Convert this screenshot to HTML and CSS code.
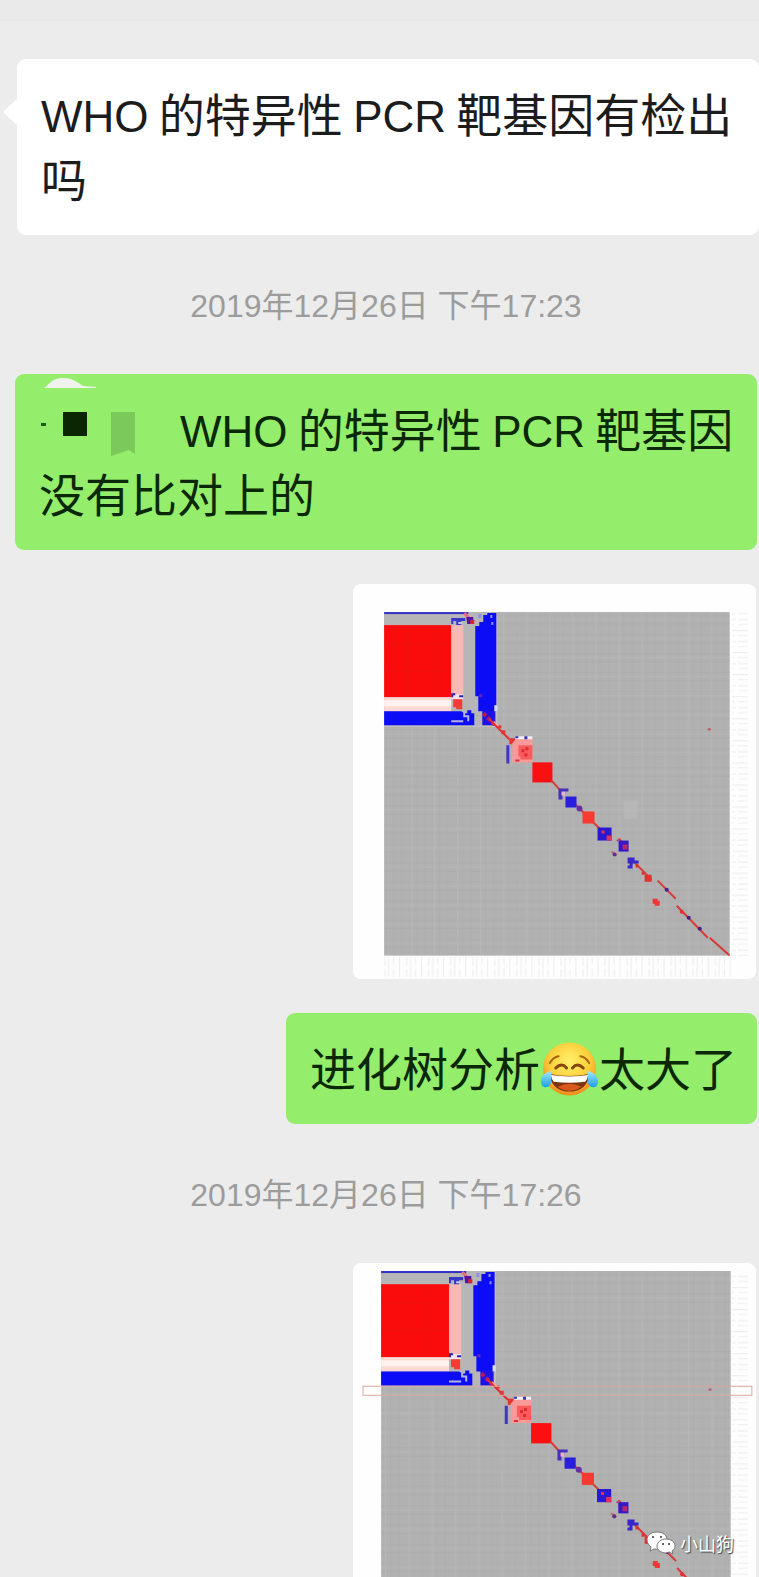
FILE: index.html
```
<!DOCTYPE html>
<html lang="zh-CN">
<head>
<meta charset="utf-8">
<meta name="viewport" content="width=device-width, initial-scale=1">
<title>聊天记录</title>
<link rel="stylesheet" href="styles.css">
</head>
<body>
<svg class="defs" aria-hidden="true">
  <defs>
    <pattern id="weave" width="23" height="19" patternUnits="userSpaceOnUse">
      <path d="M0 3.5H23M0 11.5H23" stroke="#a6a6a6" stroke-width="1" opacity=".5"/>
      <path d="M0 7.5H23M4.5 0V19" stroke="#bcbcbc" stroke-width="1" opacity=".5"/>
      <path d="M9.5 0V19M17.5 0V19" stroke="#a8a8a8" stroke-width="1" opacity=".4"/>
    </pattern>
    <pattern id="ticks-v" width="22" height="16" patternUnits="userSpaceOnUse">
      <path d="M2.5 0V16M9.5 0V13M13.5 0V16M18.5 0V12" stroke="#ececec"/>
    </pattern>
    <pattern id="ticks-h" width="16" height="22" patternUnits="userSpaceOnUse">
      <path d="M0 2.5H16M0 7.5H13M0 13.5H14M0 18.5H12" stroke="#eeeeee"/>
    </pattern>
    <symbol id="heatmap" viewBox="0 0 345 343">
      <rect width="345" height="343" fill="#b1b1b1"/>
      <rect width="345" height="343" fill="url(#weave)"/>
      <rect width="112" height="113" fill="#b6b6b6"/>
      <path d="M112.500 0V113M0 114H112" stroke="#c6c6c6" fill="none"/>
      <rect width="84" height="2" fill="#3434c4"/>
      <rect y="13" width="67" height="72" fill="#fb0d0d"/>
      <path d="M0 31.500H67M0 58.500H67M24.500 13V85M49.500 13V85" stroke="#e41616" opacity=".5"/>
      <rect x="67" y="13" width="12" height="72" fill="#f6b9b5"/>
      <rect y="85" width="67" height="14" fill="#ffd9d4"/>
      <rect y="88" width="67" height="6" fill="#fff1ed"/>
      <rect x="67" y="82" width="12" height="5" fill="#f5e4f0"/>
      <path d="M68 85v-3h3M75 84h4" stroke="#2b20a8" stroke-width="2" fill="none"/>
      <path d="M69 87h9v10H72v-2h-3z" fill="#f33c36"/>
      <path d="M67 6h14v3h-4v4h-5V9h-3v3h-2z" fill="#3838c8"/>
      <path d="M74 10h4v2h-4z" fill="#c6c6ec"/>
      <path d="M80 1l9 9" stroke="#e56a86" stroke-width="3"/>
      <path d="M82 5h7v7h-6z" fill="#5414a0"/>
      <path d="M86 8h4v4h-4z" fill="#e02038"/>
      <path d="M99 3h4V1h9v98h-18V84h-3V14h4v-4h4z" fill="#0c0cf6"/>
      <path d="M94 2h3v4h-3zM106 3h2v3h-2zM107 10h2v3h-2z" fill="#9090e8"/>
      <path d="M0 99h77l3 2h3v-3h4v3h3v12H0z" fill="#0c0cf6"/>
      <path d="M67 109h12M80 98v6h4v5" fill="none" stroke="#b4b4df" stroke-width="2"/>
      <path d="M98 98h13v15H98z" fill="#1c12e6"/>
      <path d="M110 93h3v6h-3z" fill="#dcdcf2"/>
      <path d="M95 82h3v3h-3z" fill="#6a22c8"/>
      <path d="M99 101l12 12" stroke="#b01868" stroke-width="4" stroke-dasharray="4 2"/>
      <path d="M109 110l7 6" stroke="#f0b0b0" stroke-width="3"/>
      <path d="M105 107l20 20" stroke="#de3030" stroke-width="2"/>
      <path d="M114 113h3v3h-3zM117 118h4v4h-4zM125 126h6v6h-6z" fill="#e53434"/>
      <path d="M122 133h3v18h-3z" fill="#4434c4"/>
      <path d="M128 131l4-5h16v24h-20z" fill="#f99a9a"/>
      <path d="M134 133h14v14h-12v-3h-2z" fill="#fa5c5c"/>
      <path d="M137 137h3v3h-3zM141 135h3v3h-3zM140 141h3v3h-3zM131 147h4v2h-4z" fill="#df2b35"/>
      <path d="M131 124h17v3h-17z" fill="#f0eef6"/>
      <path d="M131 124h3v2h-3zM140 124h3v3h-3z" fill="#3a30ba"/>
      <rect x="148" y="150" width="20" height="20" fill="#fa1010"/>
      <path d="M167 168l8 9M191 192l34 34M234 226l8 8M250 250l17 17M273 268l18 18M292 293l31 32M325 325l20 18" stroke="#d63b3b" stroke-width="2" fill="none"/>
      <path d="M174 176h10v3h-3v3h-3v5h-4z" fill="#4332bb"/>
      <path d="M177 179h4v4h-4z" fill="#e9b3cb"/>
      <path d="M181 184h11v11h-11z" fill="#291edd"/>
      <circle cx="195" cy="196" r="3" fill="#6431a0"/>
      <rect x="198" y="199" width="12" height="12" fill="#f83a30"/>
      <rect x="213" y="215" width="14" height="13" fill="#2a18d2"/>
      <path d="M217 218h3v3h-3zM222 223h5v5h-5z" fill="#e1305a"/>
      <rect x="234" y="228" width="10" height="11" fill="#3519c6"/>
      <path d="M238 232h5v5h-5z" fill="#b92663"/>
      <circle cx="233" cy="228" r="1" fill="#9a3b6d"/>
      <path d="M227 239l5 4" stroke="#c96565" stroke-width="2"/>
      <circle cx="230" cy="242" r="2" fill="#5a328e"/>
      <path d="M243 245h7v3h4v3h-6v5h-5v-3h2v-2h-2z" fill="#3728cc"/>
      <path d="M260 262h7v7h-7zM251 252h3v3h-3zM257 259h3v3h-3z" fill="#e03232"/>
      <path d="M268 286h5v2h2v5h-5v-2h-2z" fill="#ef3636"/>
      <circle cx="282" cy="277" r="2" fill="#432389"/>
      <circle cx="297" cy="299" r="2" fill="#e02f35"/>
      <circle cx="304" cy="305" r="2" fill="#432389"/>
      <circle cx="315" cy="316" r="2" fill="#432389"/>
      <rect x="323" y="116" width="3" height="2" fill="#c85555"/>
    </symbol>
  </defs>
</svg>

<header class="topbar"></header>
<main class="chat">
  <div class="bubble received"><p><span class="latin">WHO</span> 的特异性 <span class="latin">PCR</span> 靶基因有检出吗</p></div>

  <time class="stamp">2019年12月26日 下午17:23</time>

  <div class="bubble sent">
    <svg class="smudge" viewBox="0 0 54 12" aria-hidden="true"><path d="M1 11C7 7 9 1 20 1s15 5 20 8l13 1v1z" fill="#f0f2ee"/></svg>
    <p><svg class="redacted" viewBox="0 0 141 46" aria-hidden="true"><path d="M2 13h5v3H2z" fill="#1d5a12"/><path d="M24 2h24v24H24z" fill="#0b2603"/><path d="M72 2h24v42l-6-4-9 3-9 3z" fill="#7ac95a"/></svg><span class="latin">WHO</span> 的特异性 <span class="latin">PCR</span> 靶基因没有比对上的</p>
  </div>

  <figure class="picture">
    <svg viewBox="0 0 402 394" role="img" aria-label="聚类热图">
      <rect x="31" y="372" width="346" height="20" fill="url(#ticks-v)"/>
      <rect x="378" y="28" width="16" height="344" fill="url(#ticks-h)"/>
      <use href="#heatmap" x="31" y="28" width="345" height="343"/>
      <rect x="270" y="216" width="14" height="18" fill="#bababa" opacity=".6"/>
    </svg>
  </figure>

  <div class="bubble sent"><p>进化树分析<svg class="emoji" viewBox="0 0 60 58" role="img" aria-label="笑哭">
    <defs>
      <radialGradient id="face" cx=".5" cy=".35" r=".68"><stop offset="0" stop-color="#fff06a"/><stop offset=".55" stop-color="#fdcf3c"/><stop offset="1" stop-color="#ed8318"/></radialGradient>
      <linearGradient id="tear" x2="0" y2="1"><stop offset="0" stop-color="#9ee8ff"/><stop offset="1" stop-color="#1c9fe8"/></linearGradient>
    </defs>
    <circle cx="30" cy="29" r="27" fill="url(#face)"/>
    <path d="M10 23q3-6 9-7M50 23q-3-6-9-7" fill="none" stroke="#a8640e" stroke-width="2" stroke-linecap="round"/>
    <path d="M16 28q6-6 11 0M33 28q5-6 11 0" fill="none" stroke="#85470b" stroke-width="3" stroke-linecap="round"/>
    <path d="M10 34q20 4 40 0c0 11-9 18-20 18S10 45 10 34z" fill="#7a330c"/>
    <path d="M11 35q19 3 38 0-1 5-3 7-16 2-32 0-2-2-3-7z" fill="#fff"/>
    <path d="M18 47q12-6 24 0-5 4-12 4t-12-4z" fill="#d9581c"/>
    <path d="M12 31C5 32 0 37 1 43c1 6 8 6 10 1 1-4 0-7 1-13zM48 31c7 1 12 6 11 12-1 6-8 6-10 1-1-4 0-7-1-13z" fill="url(#tear)"/>
  </svg>太大了</p></div>

  <time class="stamp">2019年12月26日 下午17:26</time>

  <figure class="picture cut">
    <svg viewBox="0 0 402 313" role="img" aria-label="聚类热图,局部标注">
      <rect x="378" y="8" width="16" height="305" fill="url(#ticks-h)"/>
      <use href="#heatmap" x="28" y="8" width="349" height="347"/>
      <rect x="10" y="123" width="388" height="9" fill="none" stroke="#d9a9a0"/>
    </svg>
  </figure>
</main>

<div class="watermark">
  <svg viewBox="0 0 30 26" aria-hidden="true">
    <path d="M11 2C5 2 1 5 1 10c0 3 2 5 4 7l-1 4 4-2c7 1 13-3 13-9 0-5-4-8-10-8z" fill="#fff" stroke="#777" stroke-width="1"/>
    <path d="M20 9c-5 0-9 3-9 7s4 7 9 7l3-1 4 2-1-3c2-1 3-3 3-5 0-4-4-7-9-7z" fill="#fff" stroke="#777" stroke-width="1"/>
    <path d="M6 6h2v2H6zM14 6h2v2h-2zM16 13h2v2h-2zM22 13h2v2h-2z" fill="#666"/>
  </svg>
  <span>小山狗</span>
</div>
</body>
</html>
```
FILE: styles.css
```
* {
  box-sizing: border-box;
}

body {
  position: relative;
  margin: 0;
  overflow-x: hidden;
  background: #ececec;
  color: #1c1c1c;
  font-family: "Noto Sans CJK SC", sans-serif;
}

.defs {
  position: absolute;
  width: 0;
  height: 0;
}

.topbar {
  height: 21px;
  background: #eaeaea;
  border-bottom: 2px solid #e7e7e7;
}

.chat {
  display: flex;
  flex-direction: column;
  padding: 38px 2px 0 15px;
}

.bubble {
  position: relative;
  padding: 21px 20px 25px 24px;
  border-radius: 9px;
  font-size: 46px;
  line-height: 65px;
}

.bubble p {
  margin: 0;
}

.latin {
  font-family: "Liberation Sans", Arial, sans-serif;
  font-size: 44px;
  line-height: 1;
}

.received {
  margin: 0 -2px 0 2px;
  background: #fff;
}

.received::before {
  content: "";
  position: absolute;
  top: 40px;
  left: -14px;
  border: 13px solid transparent;
  border-right: 14px solid #fff;
  border-left: 0;
}

.sent {
  align-self: flex-end;
  background: #94ed6b;
  color: #0b2806;
}

.stamp {
  margin: 51px 0 48px;
  color: #9c9c9c;
  font-family: "Liberation Sans", Arial, "Noto Sans CJK SC", sans-serif;
  font-size: 32px;
  line-height: 40px;
  text-align: center;
}

.smudge {
  position: absolute;
  top: 3px;
  left: 28px;
  width: 54px;
  height: 12px;
}

.redacted {
  display: inline-block;
  width: 141px;
  height: 46px;
  vertical-align: -9px;
}

.emoji {
  display: inline-block;
  width: 59px;
  height: 58px;
  vertical-align: -12px;
}

.picture {
  align-self: flex-end;
  width: 54.3%;
  margin: 34px 1px 34px 0;
  overflow: hidden;
  border-radius: 8px;
  background: #fefefe;
}

.picture svg {
  display: block;
  width: 100%;
}

.picture.cut {
  margin-top: 0;
  margin-bottom: 0;
  border-radius: 8px 8px 0 0;
}

.watermark {
  position: absolute;
  right: 25px;
  bottom: 20px;
  display: flex;
  align-items: center;
  gap: 4px;
  color: #fff;
  font-size: 18px;
  line-height: 28px;
  text-shadow: 1px 1px 1px #444;
}

.watermark svg {
  width: 30px;
  height: 26px;
}
```
